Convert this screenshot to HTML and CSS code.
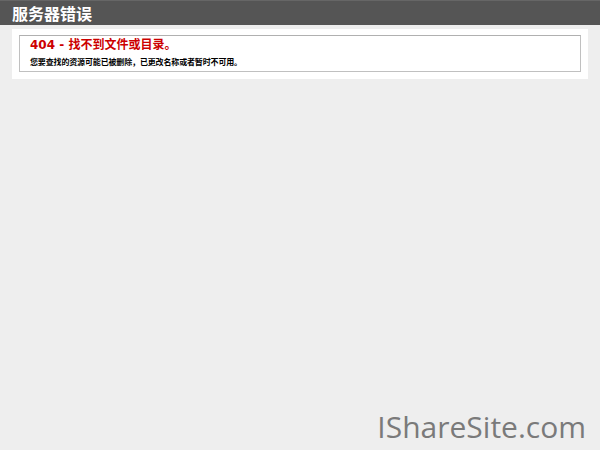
FILE: index.html
```html
<!DOCTYPE html>
<html lang="zh-CN">
<head>
<meta charset="utf-8">
<title>404 - 找不到文件或目录。</title>
<link rel="stylesheet" href="styles.css">
</head>
<body>
<div class="header"><h1 class="title">服务器错误</h1></div>
<div class="content">
  <div class="container">
    <fieldset class="box">
      <h2 class="err">404 - 找不到文件或目录。</h2>
      <h3 class="msg">您要查找的资源可能已被删除，已更改名称或者暂时不可用。</h3>
    </fieldset>
  </div>
</div>
<div class="watermark">IShareSite.com</div>
</body>
</html>
```

FILE: styles.css
```css
html, body {
  height: 100%;
}
body {
  margin: 0;
  background: #eeeeee;
  font-family: "DejaVu Sans", Verdana, "Noto Sans CJK SC", sans-serif;
  position: relative;
  overflow: hidden;
}
.header {
  background: #555555;
  border-top: 1px solid #666;
  height: 24px;
  padding: 0 12px;
  display: flex;
  align-items: center;
}
.title {
  margin: 0;
  color: #fff;
  font-size: 16px;
  font-weight: bold;
  line-height: 1;
  font-family: "Noto Sans CJK SC", sans-serif;
}
.content {
  padding: 4px 12px 0 12px;
}
.container {
  background: #fff;
  padding: 6px 7px 7px 7px;
}
.box {
  margin: 0;
  border: 1px solid #c0c0c0;
  border-top-color: #b0b0b0;
  padding: 1px 10px 4px 10px;
}
.err {
  margin: 0;
  color: #cc0000;
  font-size: 12px;
  font-weight: bold;
  line-height: 16px;
  font-family: "DejaVu Sans", "Noto Sans CJK SC", sans-serif;
}
.msg {
  margin: 3px 0 0 0;
  color: #000;
  font-size: 8px;
  font-weight: bold;
  line-height: 11px;
  letter-spacing: -0.15px;
  font-family: "Noto Sans CJK SC", sans-serif;
}
.watermark {
  position: absolute;
  right: 14px;
  bottom: 8px;
  font-family: "Open Sans", "Noto Sans", sans-serif;
  font-size: 30px;
  color: #7a7a7a;
  line-height: 1;
}
```
